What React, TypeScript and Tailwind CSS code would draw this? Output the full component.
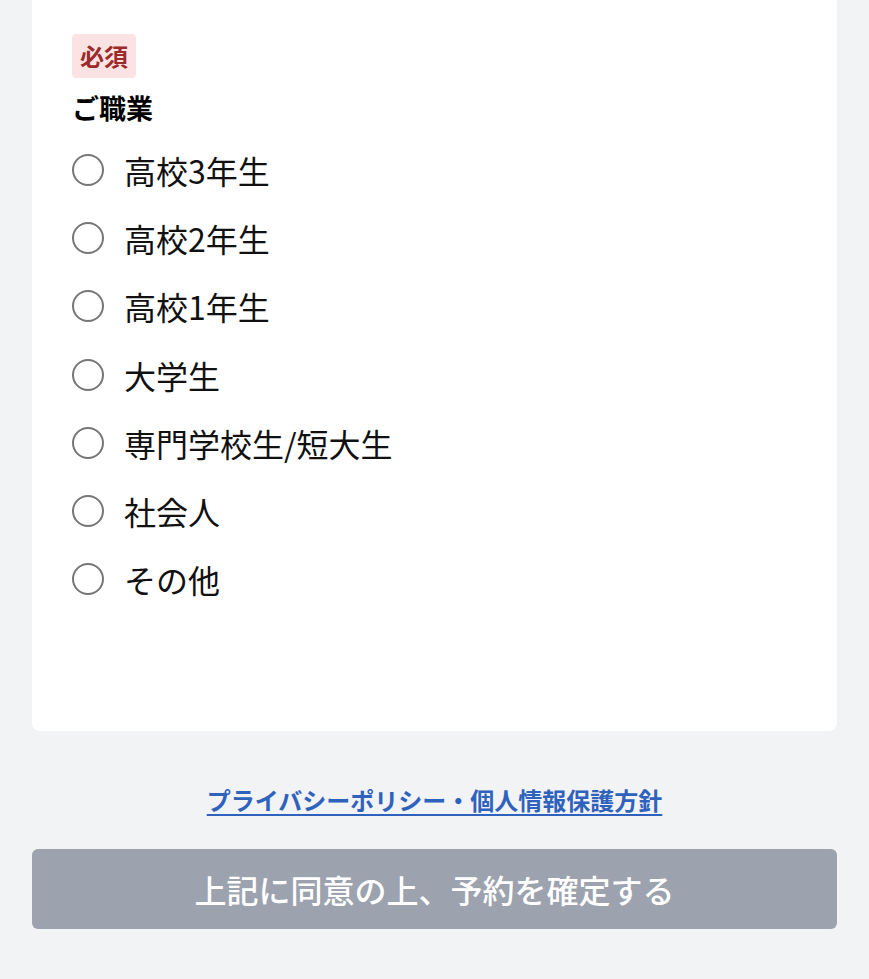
import React from 'react';

const options = [
  '高校3年生',
  '高校2年生',
  '高校1年生',
  '大学生',
  '専門学校生/短大生',
  '社会人',
  'その他',
];

const font = { fontFamily: '"Noto Sans CJK JP", "Noto Sans", sans-serif' };

export default function App() {
  return (
    <div className="min-h-[979px] bg-[#f2f3f5] px-8" style={font}>
      <div className="rounded-b-lg bg-white px-10 pt-[34px] pb-[118px]">
        <span className="inline-block rounded bg-[#fbe3e3] px-2 py-1 text-[24px] leading-[36px] font-bold text-[#9b2a2a]">
          必須
        </span>
        <div className="mt-[10px] text-[27px] leading-[40px] font-bold text-black">ご職業</div>
        <div className="mt-2 flex flex-col">
          {options.map((label) => (
            <label key={label} className="flex h-[68.2px] items-center gap-5">
              <span className="h-8 w-8 shrink-0 rounded-full border-2 border-[#767676] bg-white" />
              <span className="text-[32px] leading-none text-[#111]">{label}</span>
            </label>
          ))}
        </div>
      </div>

      <div className="mt-[51px] text-center">
        <a href="#" className="text-[24px] leading-[36px] font-bold text-[#2f62bd] underline underline-offset-4">
          プライバシーポリシー・個人情報保護方針
        </a>
      </div>

      <button
        type="button"
        className="mt-[31px] flex h-[80px] w-full items-center justify-center rounded-md bg-[#9ca2ae] text-[32px] font-medium text-white"
      >
        上記に同意の上、予約を確定する
      </button>
    </div>
  );
}
